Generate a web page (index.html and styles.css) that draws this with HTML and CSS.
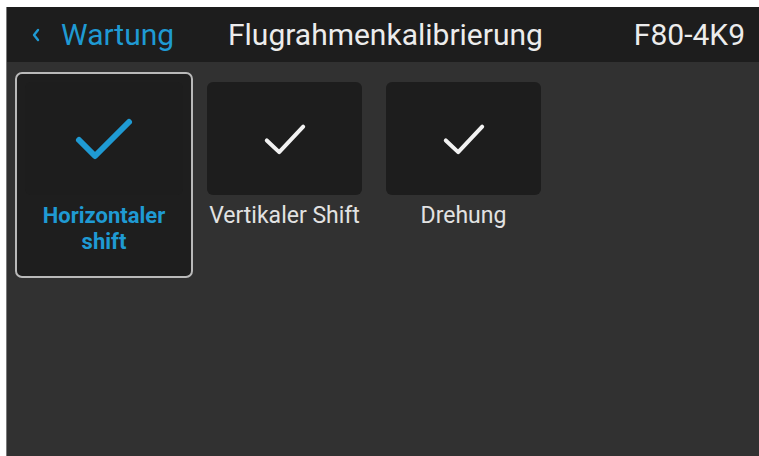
FILE: index.html
```html
<!DOCTYPE html>
<html lang="de">
<head>
<meta charset="utf-8">
<title>Flugrahmenkalibrierung</title>
<link rel="stylesheet" href="styles.css">
</head>
<body>
<div class="screen">
  <header class="topbar">
    <a class="back" href="#">
      <svg class="chev" viewBox="0 0 10 14" width="10" height="14"><path d="M7 2 L3 7 L7 12" fill="none" stroke="currentColor" stroke-width="2.4" stroke-linecap="round" stroke-linejoin="round"/></svg>
      <span>Wartung</span>
    </a>
    <h1 class="title">Flugrahmenkalibrierung</h1>
    <div class="code">F80-4K9</div>
  </header>
  <main class="options">
    <div class="option selected">
      <div class="tile">
        <svg viewBox="0 0 60 44" width="60" height="44"><path d="M5 23 L21 39 L55 5" fill="none" stroke="currentColor" stroke-width="6" stroke-linecap="round" stroke-linejoin="round"/></svg>
      </div>
      <div class="label">Horizontaler shift</div>
    </div>
    <div class="option">
      <div class="tile">
        <svg viewBox="0 0 60 44" width="44" height="32"><path d="M5 24 L22 40 L55 5" fill="none" stroke="currentColor" stroke-width="5.5" stroke-linecap="round" stroke-linejoin="round"/></svg>
      </div>
      <div class="label">Vertikaler Shift</div>
    </div>
    <div class="option">
      <div class="tile">
        <svg viewBox="0 0 60 44" width="44" height="32"><path d="M5 24 L22 40 L55 5" fill="none" stroke="currentColor" stroke-width="5.5" stroke-linecap="round" stroke-linejoin="round"/></svg>
      </div>
      <div class="label">Drehung</div>
    </div>
  </main>
</div>
</body>
</html>
```
FILE: styles.css
```css
html, body {
  margin: 0;
  height: 100%;
  background: #ffffff;
}

body {
  box-sizing: border-box;
  padding: 7px 0 0 6px;
  font-family: Roboto, "Noto Sans", sans-serif;
}

.screen {
  height: 100%;
  display: flex;
  flex-direction: column;
  background: #313131;
  border-left: 1px solid #7a7a7a;
}

.topbar {
  height: 55px;
  flex: none;
  background: #1d1d1d;
  display: flex;
  align-items: center;
  padding: 0 14px 0 24px;
  color: #ececec;
  font-size: 30px;
}

.back {
  display: flex;
  align-items: center;
  gap: 20px;
  color: #1f9ad3;
  text-decoration: none;
  width: 194px;
}

.chev {
  flex: none;
}

.title {
  flex: 1;
  margin: 0;
  font-size: 30px;
  font-weight: 400;
  text-align: center;
  padding-right: 88px;
}

.code {
  text-align: right;
}

.options {
  display: flex;
  gap: 4px;
  padding: 10px 8px;
  align-items: flex-start;
}

.option {
  width: 175px;
  box-sizing: border-box;
  padding: 8px 8px 21px;
  border: 2px solid transparent;
  border-radius: 7px;
  display: flex;
  flex-direction: column;
  align-items: stretch;
}

.option.selected {
  width: 178px;
  border-color: #b9b9b9;
  background: #1e1e1e;
}

.tile {
  height: 113px;
  background: #1d1d1d;
  border-radius: 6px;
  display: flex;
  align-items: center;
  justify-content: center;
  color: #f2f2f2;
}

.selected .tile {
  color: #1f9ad3;
}

.label {
  margin-top: 8px;
  line-height: 26px;
  font-size: 23px;
  color: #e2e2e2;
  text-align: center;
  white-space: nowrap;
}

.selected .label {
  color: #1f9ad3;
  font-weight: 700;
  font-size: 22px;
  white-space: normal;
  padding: 0 10px;
}
```
